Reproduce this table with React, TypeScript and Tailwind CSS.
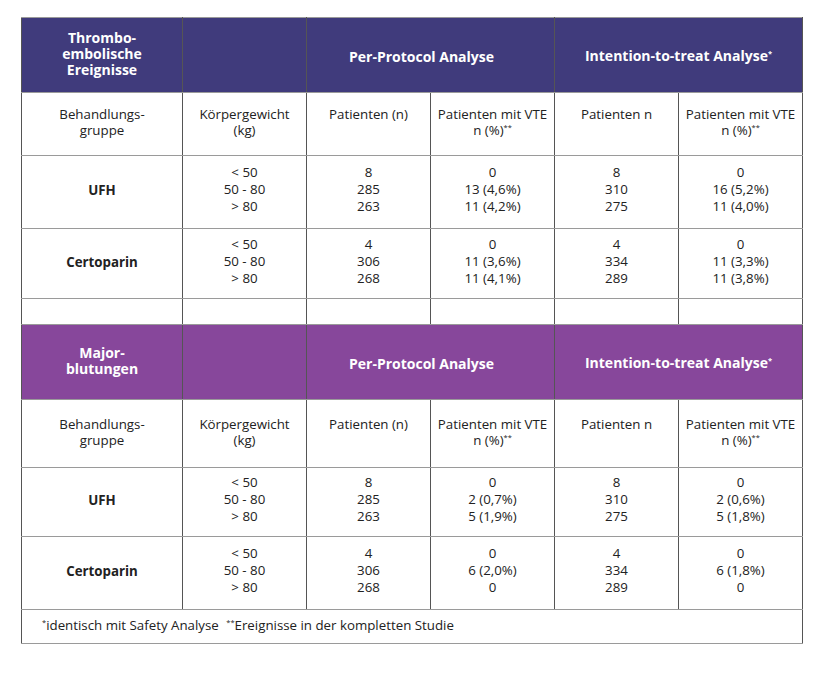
import React from "react";

const V = "border-x border-x-[#555] border-y border-y-[#9a9a9a]";

function Sup({ children }: { children: React.ReactNode }) {
  return <sup className="text-[7.5px] relative -top-[5px] align-baseline">{children}</sup>;
}

function HeaderRow({ bg, label }: { bg: string; label: React.ReactNode }) {
  return (
    <tr className={`${bg} text-white font-bold`}>
      <td className={`${V} h-[75px] text-[14px] leading-[16px] pb-[3px]`}>{label}</td>
      <td className={`${V}`}></td>
      <td className={`${V} text-[14px] pt-[2px] pr-[18px]`} colSpan={2}>Per-Protocol Analyse</td>
      <td className={`${V} text-[14px]`} colSpan={2}>
        Intention-to-treat Analyse<Sup>*</Sup>
      </td>
    </tr>
  );
}

function SubRow({ h, pt }: { h: string; pt: string }) {
  return (
    <tr className="text-[13.3px] leading-[16px]">
      <td className={`${V} ${h} ${pt} align-top`}>Behandlungs-<br />gruppe</td>
      <td className={`${V} ${pt} align-top`}>Körpergewicht<br />(kg)</td>
      <td className={`${V} ${pt} align-top`}>Patienten (n)</td>
      <td className={`${V} ${pt} align-top`}>Patienten mit VTE<br />n (%)<Sup>**</Sup></td>
      <td className={`${V} ${pt} align-top`}>Patienten n</td>
      <td className={`${V} ${pt} align-top`}>Patienten mit VTE<br />n (%)<Sup>**</Sup></td>
    </tr>
  );
}

function DataRow({ h, label, cols }: { h: string; label: string; cols: string[][] }) {
  return (
    <tr className="text-[13.3px] leading-[17px]">
      <td className={`${V} ${h} font-bold pb-[3px]`}>{label}</td>
      {cols.map((c, i) => (
        <td key={i} className={`${V} pb-[5px]`}>
          {c.map((l, j) => (
            <div key={j}>{l}</div>
          ))}
        </td>
      ))}
    </tr>
  );
}

const W = ["< 50", "50 - 80", "> 80"];

export default function App() {
  return (
    <div className="w-[821px] h-[679px] bg-white pt-[17px] pl-[21px]" style={{ fontFamily: '"Open Sans", "Noto Sans", sans-serif' }}>
      <table className="border-collapse table-fixed text-center text-[#222] border border-[#8a8a8a]" style={{ width: 781 }}>
        <colgroup>
          <col style={{ width: 161 }} />
          <col style={{ width: 124 }} />
          <col style={{ width: 124 }} />
          <col style={{ width: 124 }} />
          <col style={{ width: 124 }} />
          <col style={{ width: 124 }} />
        </colgroup>
        <tbody>
          <HeaderRow bg="bg-[#403b7c]" label={<>Thrombo-<br />embolische<br />Ereignisse</>} />
          <SubRow h="h-[63px]" pt="pt-[13px]" />
          <DataRow h="h-[73px]" label="UFH" cols={[W, ["8", "285", "263"], ["0", "13 (4,6%)", "11 (4,2%)"], ["8", "310", "275"], ["0", "16 (5,2%)", "11 (4,0%)"]]} />
          <DataRow h="h-[70px]" label="Certoparin" cols={[W, ["4", "306", "268"], ["0", "11 (3,6%)", "11 (4,1%)"], ["4", "334", "289"], ["0", "11 (3,3%)", "11 (3,8%)"]]} />
          <tr>
            <td className={`${V} h-[26px]`}></td>
            <td className={V}></td>
            <td className={V}></td>
            <td className={V}></td>
            <td className={V}></td>
            <td className={V}></td>
          </tr>
          <HeaderRow bg="bg-[#87479b]" label={<>Major-<br />blutungen</>} />
          <SubRow h="h-[68px]" pt="pt-[16px]" />
          <DataRow h="h-[69px]" label="UFH" cols={[W, ["8", "285", "263"], ["0", "2 (0,7%)", "5 (1,9%)"], ["8", "310", "275"], ["0", "2 (0,6%)", "5 (1,8%)"]]} />
          <DataRow h="h-[73px]" label="Certoparin" cols={[W, ["4", "306", "268"], ["0", "6 (2,0%)", "0"], ["4", "334", "289"], ["0", "6 (1,8%)", "0"]]} />
          <tr className="text-[13.3px]">
            <td colSpan={6} className={`${V} h-[34px] text-left pl-[20px] pb-[2px]`}>
              <Sup>*</Sup>identisch mit Safety Analyse{"  "}
              <span className="ml-[4px]"><Sup>**</Sup>Ereignisse in der kompletten Studie</span>
            </td>
          </tr>
        </tbody>
      </table>
    </div>
  );
}
